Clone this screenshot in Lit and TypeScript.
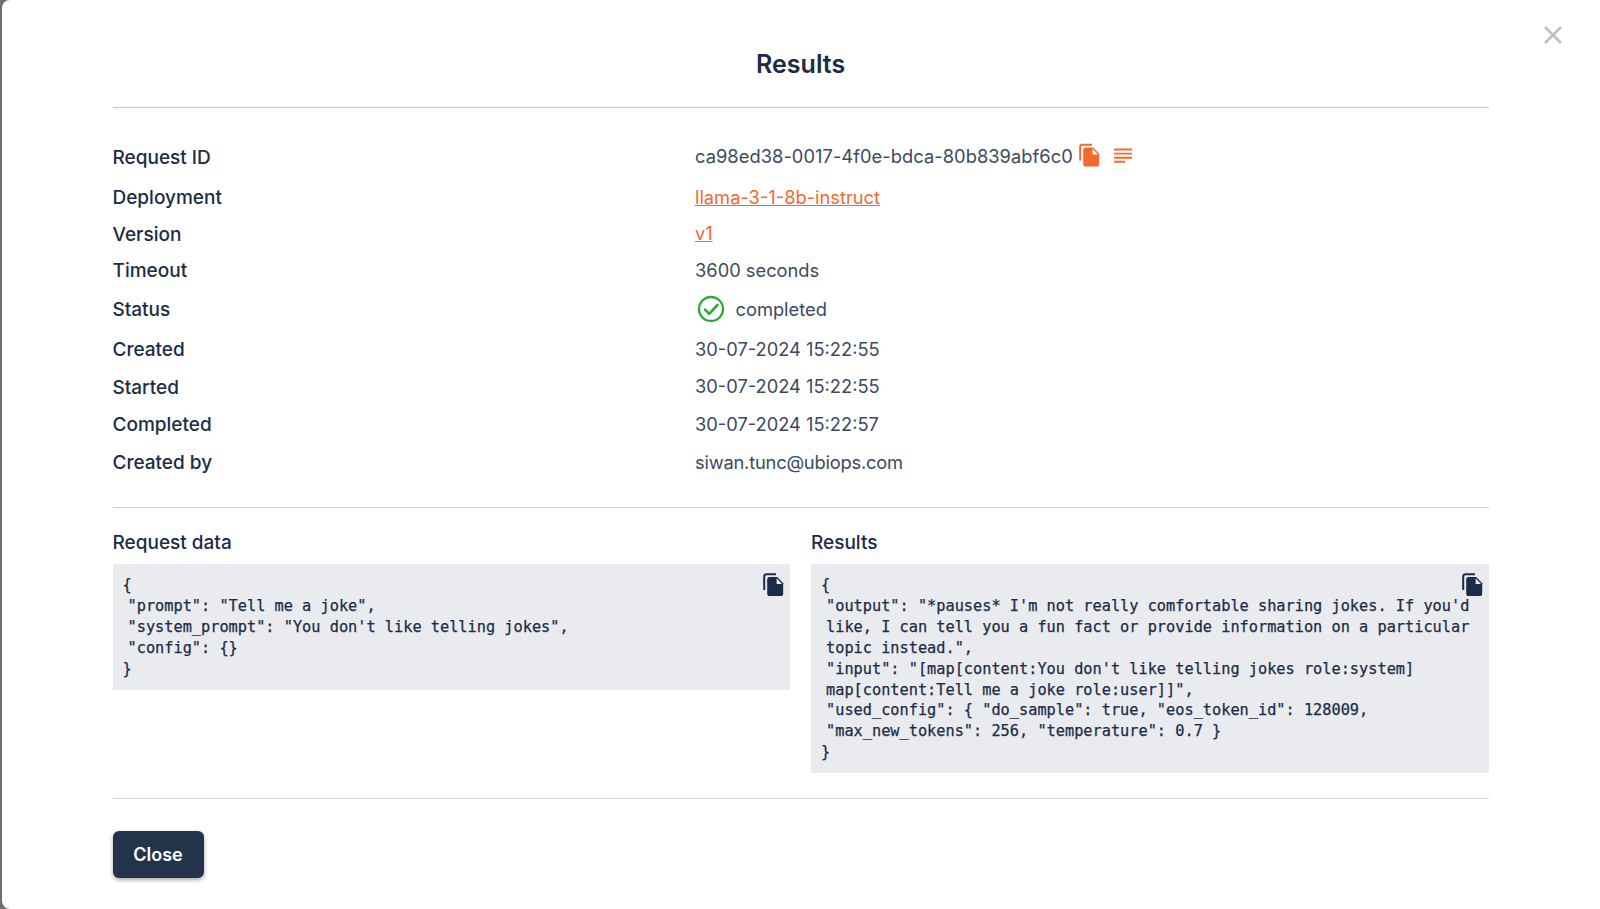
import { LitElement, html, css, svg } from "lit";
import { customElement } from "lit/decorators.js";

const copyIcon = (cls: string) => html`<svg class=${cls} viewBox="0 0 24 24" aria-hidden="true">
  <path fill="none" stroke="currentColor" stroke-width="2" d="M3.2 17.5V4.2a2.4 2.4 0 0 1 2.4-2.4H15" />
  <path fill="currentColor" d="M8.6 4.6h7.6l6 6.2V21a2.6 2.6 0 0 1-2.6 2.6H8.8A2.6 2.6 0 0 1 6.2 21V7a2.4 2.4 0 0 1 2.4-2.4z" />
  <path fill="#fff" class="fold" d="M15.6 5.8v5.6h5.4z" />
</svg>`;

const rows: [string, unknown, string][] = [
  ["Request ID", html`<span class="rid">ca98ed38-0017-4f0e-bdca-80b839abf6c0</span>
    ${copyIcon("copy orange")}
    <svg class="lines" viewBox="0 0 18 16" aria-hidden="true">
      ${svg`<path stroke="currentColor" stroke-width="1.9" d="M0 1.5h18M0 5.6h18M0 9.7h18M0 13.8h11" />`}
    </svg>`, "r-id"],
  ["Deployment", html`<a href="#">llama-3-1-8b-instruct</a>`, "r-dep"],
  ["Version", html`<a href="#">v1</a>`, "r-ver"],
  ["Timeout", "3600 seconds", "r-time"],
  ["Status", html`<svg class="check" viewBox="0 0 28 28" aria-hidden="true">
      ${svg`<circle cx="14" cy="14" r="12" fill="none" stroke="currentColor" stroke-width="2.3" />
      <path d="M8 14.6l4.2 4.2L20.4 10" fill="none" stroke="currentColor" stroke-width="2.6" stroke-linecap="round" stroke-linejoin="round" />`}
    </svg><span>completed</span>`, "r-status"],
  ["Created", "30-07-2024 15:22:55", "r-date"],
  ["Started", "30-07-2024 15:22:55", "r-date"],
  ["Completed", "30-07-2024 15:22:57", "r-date"],
  ["Created by", html`<span class="mail">siwan.tunc@ubiops.com</span>`, "r-date"],
];

const requestData = [
  "{",
  ' "prompt": "Tell me a joke",',
  ' "system_prompt": "You don\'t like telling jokes",',
  ' "config": {}',
  "}",
];

const resultData = [
  "{",
  ' "output": "*pauses* I\'m not really comfortable sharing jokes. If you\'d',
  " like, I can tell you a fun fact or provide information on a particular",
  ' topic instead.",',
  ' "input": "[map[content:You don\'t like telling jokes role:system]',
  ' map[content:Tell me a joke role:user]]",',
  ' "used_config": { "do_sample": true, "eos_token_id": 128009,',
  ' "max_new_tokens": 256, "temperature": 0.7 }',
  "}",
];

const codeLines = (lines: string[]) =>
  lines.map((l) =>
    l.startsWith(" ")
      ? html`<div class="line in">${l.slice(1)}</div>`
      : html`<div class="line">${l}</div>`
  );

@customElement("app-root")
export class AppRoot extends LitElement {
  static styles = css`
    :host {
      display: block;
      height: 909px;
      overflow: hidden;
      background: #6f6f6f;
      font-family: Inter, "Liberation Sans", sans-serif;
      color: #1a2c47;
    }
    .modal {
      position: relative;
      box-sizing: border-box;
      height: 909px;
      margin-left: 2px;
      padding: 0 111.3px 0 110.5px;
      background: #fff;
      border-radius: 8px 0 0 8px;
    }
    .x {
      position: absolute;
      top: 26px;
      right: 38px;
      width: 18px;
      height: 18px;
      color: #c0c0c0;
    }
    h1 {
      margin: 0;
      height: 108px;
      box-sizing: border-box;
      padding-top: 46.5px;
      font-size: 25px;
      line-height: 34px;
      font-weight: 600;
      text-align: center;
      border-bottom: 1px solid #c9c9c9;
    }
    .rows {
      padding: 26px 0 26.6px;
      border-bottom: 1px solid #d4d4d4;
    }
    .row {
      display: grid;
      grid-template-columns: 582.5px 1fr;
      align-items: center;
    }
    .r-id { height: 44px; }
    .r-dep { height: 37px; }
    .r-ver { height: 36px; }
    .r-time { height: 37px; }
    .r-status { height: 42px; }
    .r-date { height: 37.6px; }
    .label { font-weight: 500; font-size: 19px; margin-top: 2px; }
    .r-status .label { margin-top: 0; }
    .value {
      display: flex;
      align-items: center;
      font-size: 18.3px;
      color: #3b4a5e;
    }
    .rid { letter-spacing: 0.05px; }
    .mail { letter-spacing: -0.2px; }
    a { color: #f5682e; }
    .copy { display: block; flex: none; }
    .copy.orange { width: 24px; height: 24px; margin: 0 0 3px 4px; color: #f5682e; }
    .lines { width: 18px; height: 16px; margin: 0 0 1px 13px; color: #f5682e; }
    .check { width: 28px; height: 28px; margin: 0 10.5px 0 2px; color: #2fa83a; }
    .panels {
      display: grid;
      grid-template-columns: 677px 677.5px;
      column-gap: 21.5px;
      padding-top: 24px;
      align-items: start;
      height: 291.5px;
      box-sizing: border-box;
      border-bottom: 1px solid #d4d4d4;
    }
    h2 {
      margin: 0 0 10px;
      font-size: 19px;
      line-height: 22px;
      font-weight: 500;
    }
    .code {
      position: relative;
      background: #eaebef;
      padding: 11px 10px 10px 10px;
    }
    .line {
      font-family: "DejaVu Sans Mono", "Liberation Mono", monospace;
      font-size: 15.27px;
      line-height: 20.9px;
      color: #1a2c47;
      white-space: pre;
      -webkit-text-stroke: 0.25px #1a2c47;
    }
    .line.in { padding-left: 5px; }
    .copy.dark {
      position: absolute;
      top: 8px;
      right: 5px;
      width: 24px;
      height: 25px;
      color: #1a2c47;
    }
    .copy.dark .fold { fill: #eaebef; }
    button {
      display: block;
      margin-top: 32px;
      width: 91px;
      height: 47px;
      border: 0;
      border-radius: 6px;
      background: #23344a;
      color: #fff;
      font: 600 18px Inter, "Liberation Sans", sans-serif;
      box-shadow: 0 2px 4px rgba(0, 0, 0, 0.35);
    }
  `;

  render() {
    return html`<div class="modal">
      <svg class="x" viewBox="0 0 18 18" aria-hidden="true">
        <path d="M1 1l16 16M17 1L1 17" stroke="currentColor" stroke-width="2.6" fill="none" />
      </svg>
      <h1>Results</h1>
      <div class="rows">
        ${rows.map(
          ([k, v, c]) => html`<div class="row ${c}"><div class="label">${k}</div><div class="value">${v}</div></div>`
        )}
      </div>
      <div class="panels">
        <section>
          <h2>Request data</h2>
          <div class="code">${codeLines(requestData)}${copyIcon("copy dark")}</div>
        </section>
        <section>
          <h2>Results</h2>
          <div class="code">${codeLines(resultData)}${copyIcon("copy dark")}</div>
        </section>
      </div>
      <button>Close</button>
    </div>`;
  }
}
